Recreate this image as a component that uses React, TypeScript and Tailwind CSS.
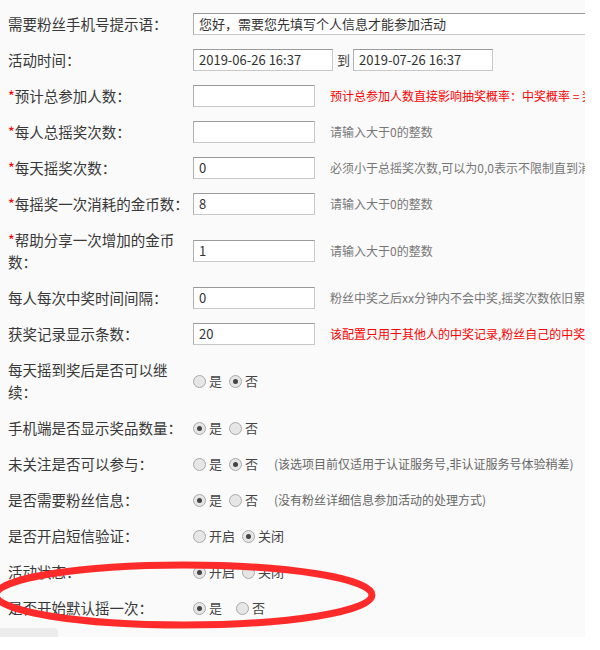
import React from 'react'

type Opt = { label: string; checked: boolean; gap?: string }

interface Row {
  label: string
  lines?: string[]
  required?: boolean
  input?: { value: string; width: string }
  tall?: boolean
  help?: string
  helpRed?: boolean
  radios?: Opt[]
  note?: string
}

const ROWS: Row[] = [
  { label: '每人总摇奖次数：', required: true, input: { value: '', width: 'w-[122px]' }, help: '请输入大于0的整数' },
  {
    label: '每天摇奖次数：',
    required: true,
    input: { value: '0', width: 'w-[122px]' },
    help: '必须小于总摇奖次数,可以为0,0表示不限制直到消耗完总次数',
  },
  { label: '每摇奖一次消耗的金币数：', required: true, input: { value: '8', width: 'w-[122px]' }, help: '请输入大于0的整数' },
  {
    label: '',
    lines: ['帮助分享一次增加的金币', '数：'],
    required: true,
    tall: true,
    input: { value: '1', width: 'w-[122px]' },
    help: '请输入大于0的整数',
  },
  {
    label: '每人每次中奖时间间隔：',
    input: { value: '0', width: 'w-[122px]' },
    help: '粉丝中奖之后xx分钟内不会中奖,摇奖次数依旧累计',
  },
  {
    label: '获奖记录显示条数：',
    input: { value: '20', width: 'w-[122px]' },
    help: '该配置只用于其他人的中奖记录,粉丝自己的中奖记录不受限制',
    helpRed: true,
  },
  {
    label: '',
    lines: ['每天摇到奖后是否可以继', '续：'],
    tall: true,
    radios: [
      { label: '是', checked: false },
      { label: '否', checked: true },
    ],
  },
  {
    label: '手机端是否显示奖品数量：',
    radios: [
      { label: '是', checked: true },
      { label: '否', checked: false },
    ],
  },
  {
    label: '未关注是否可以参与：',
    radios: [
      { label: '是', checked: false },
      { label: '否', checked: true },
    ],
    note: '(该选项目前仅适用于认证服务号,非认证服务号体验稍差)',
  },
  {
    label: '是否需要粉丝信息：',
    radios: [
      { label: '是', checked: true },
      { label: '否', checked: false },
    ],
    note: '(没有粉丝详细信息参加活动的处理方式)',
  },
  {
    label: '是否开启短信验证：',
    radios: [
      { label: '开启', checked: false },
      { label: '关闭', checked: true },
    ],
  },
  {
    label: '活动状态：',
    radios: [
      { label: '开启', checked: true },
      { label: '关闭', checked: false },
    ],
  },
  {
    label: '是否开始默认摇一次：',
    radios: [
      { label: '是', checked: true },
      { label: '否', checked: false, gap: 'ml-[14px]' },
    ],
  },
]

function TextBox({ value, width }: { value: string; width: string }) {
  return (
    <div
      className={`${width} h-[22px] shrink-0 bg-white border border-[#c8c8c8] border-t-[#9a9a9a] border-l-[#b0b0b0] px-[5px] text-[13px] leading-[20px] text-[#333] whitespace-nowrap overflow-hidden`}
    >
      {value}
    </div>
  )
}

function Radio({ checked }: { checked: boolean }) {
  return (
    <span className="w-[13px] h-[13px] rounded-full border border-[#a9a9a9] bg-[#e6e6e6] flex items-center justify-center shrink-0">
      {checked && <span className="w-[5px] h-[5px] rounded-full bg-[#444]" />}
    </span>
  )
}

function Label({ row }: { row: Row }) {
  const lines = row.lines ?? [row.label]
  return (
    <div className="w-[193px] shrink-0 pl-[8px] text-[14.5px] leading-[22px] text-[#383838]">
      {lines.map((l, i) => (
        <div key={i} className="whitespace-nowrap">
          {i === 0 && row.required && <span className="text-[#f00]">*</span>}
          {l}
        </div>
      ))}
    </div>
  )
}

export default function App() {
  return (
    <div
      className="relative w-[600px] h-[650px] bg-white overflow-hidden"
      style={{ fontFamily: '"Noto Sans CJK SC", "Noto Sans", sans-serif' }}
    >
      <div className="w-[585px] h-[637px] bg-[#fafafa] overflow-hidden pt-[6px] flex flex-col">
        {/* 提示语 */}
        <div className="flex items-center py-[7px]">
          <Label row={{ label: '需要粉丝手机号提示语：' }} />
          <TextBox value="您好，需要您先填写个人信息才能参加活动" width="w-[420px]" />
        </div>

        {/* 活动时间 */}
        <div className="flex items-center py-[7px]">
          <Label row={{ label: '活动时间：' }} />
          <TextBox value="2019-06-26 16:37" width="w-[140px]" />
          <span className="ml-[4px] mr-[3px] text-[13px] text-[#444]">到</span>
          <TextBox value="2019-07-26 16:37" width="w-[140px]" />
        </div>

        {/* 预计总参加人数 */}
        <div className="flex items-center py-[7px]">
          <Label row={{ label: '预计总参加人数：', required: true }} />
          <TextBox value="" width="w-[122px]" />
          <span className="ml-[15px] text-[12px] text-[#f00] whitespace-nowrap">
            预计总参加人数直接影响抽奖概率：中奖概率 = 奖品总数/(预计活动人数*每人抽奖次数)
          </span>
        </div>

        {ROWS.map((row, i) => (
          <div key={i} className="flex items-center py-[7px]">
            <Label row={row} />
            {row.input && <TextBox value={row.input.value} width={row.input.width} />}
            {row.help && (
              <span
                className={`ml-[15px] text-[12px] whitespace-nowrap ${
                  row.helpRed ? 'text-[#f00]' : 'text-[#777]'
                }`}
              >
                {row.help}
              </span>
            )}
            {row.radios && (
              <div className="flex items-center text-[13px] text-[#444]">
                {row.radios.map((o, j) => (
                  <div key={j} className={`flex items-center ${j > 0 ? o.gap ?? 'ml-[7px]' : ''}`}>
                    <Radio checked={o.checked} />
                    <span className="ml-[3px] leading-[22px]">{o.label}</span>
                  </div>
                ))}
              </div>
            )}
            {row.note && (
              <span className="ml-[16px] text-[12px] text-[#666] whitespace-nowrap">{row.note}</span>
            )}
          </div>
        ))}

        <div className="mt-auto w-[58px] h-[9px] bg-[#ececec] rounded-tr-[4px]" />
      </div>

      {/* red annotation ellipse */}
      <svg className="absolute left-0 top-0 pointer-events-none" width="600" height="650">
        <ellipse cx="184" cy="595" rx="188" ry="30" fill="none" stroke="#ff2b2b" strokeWidth="7" />
      </svg>
    </div>
  )
}
